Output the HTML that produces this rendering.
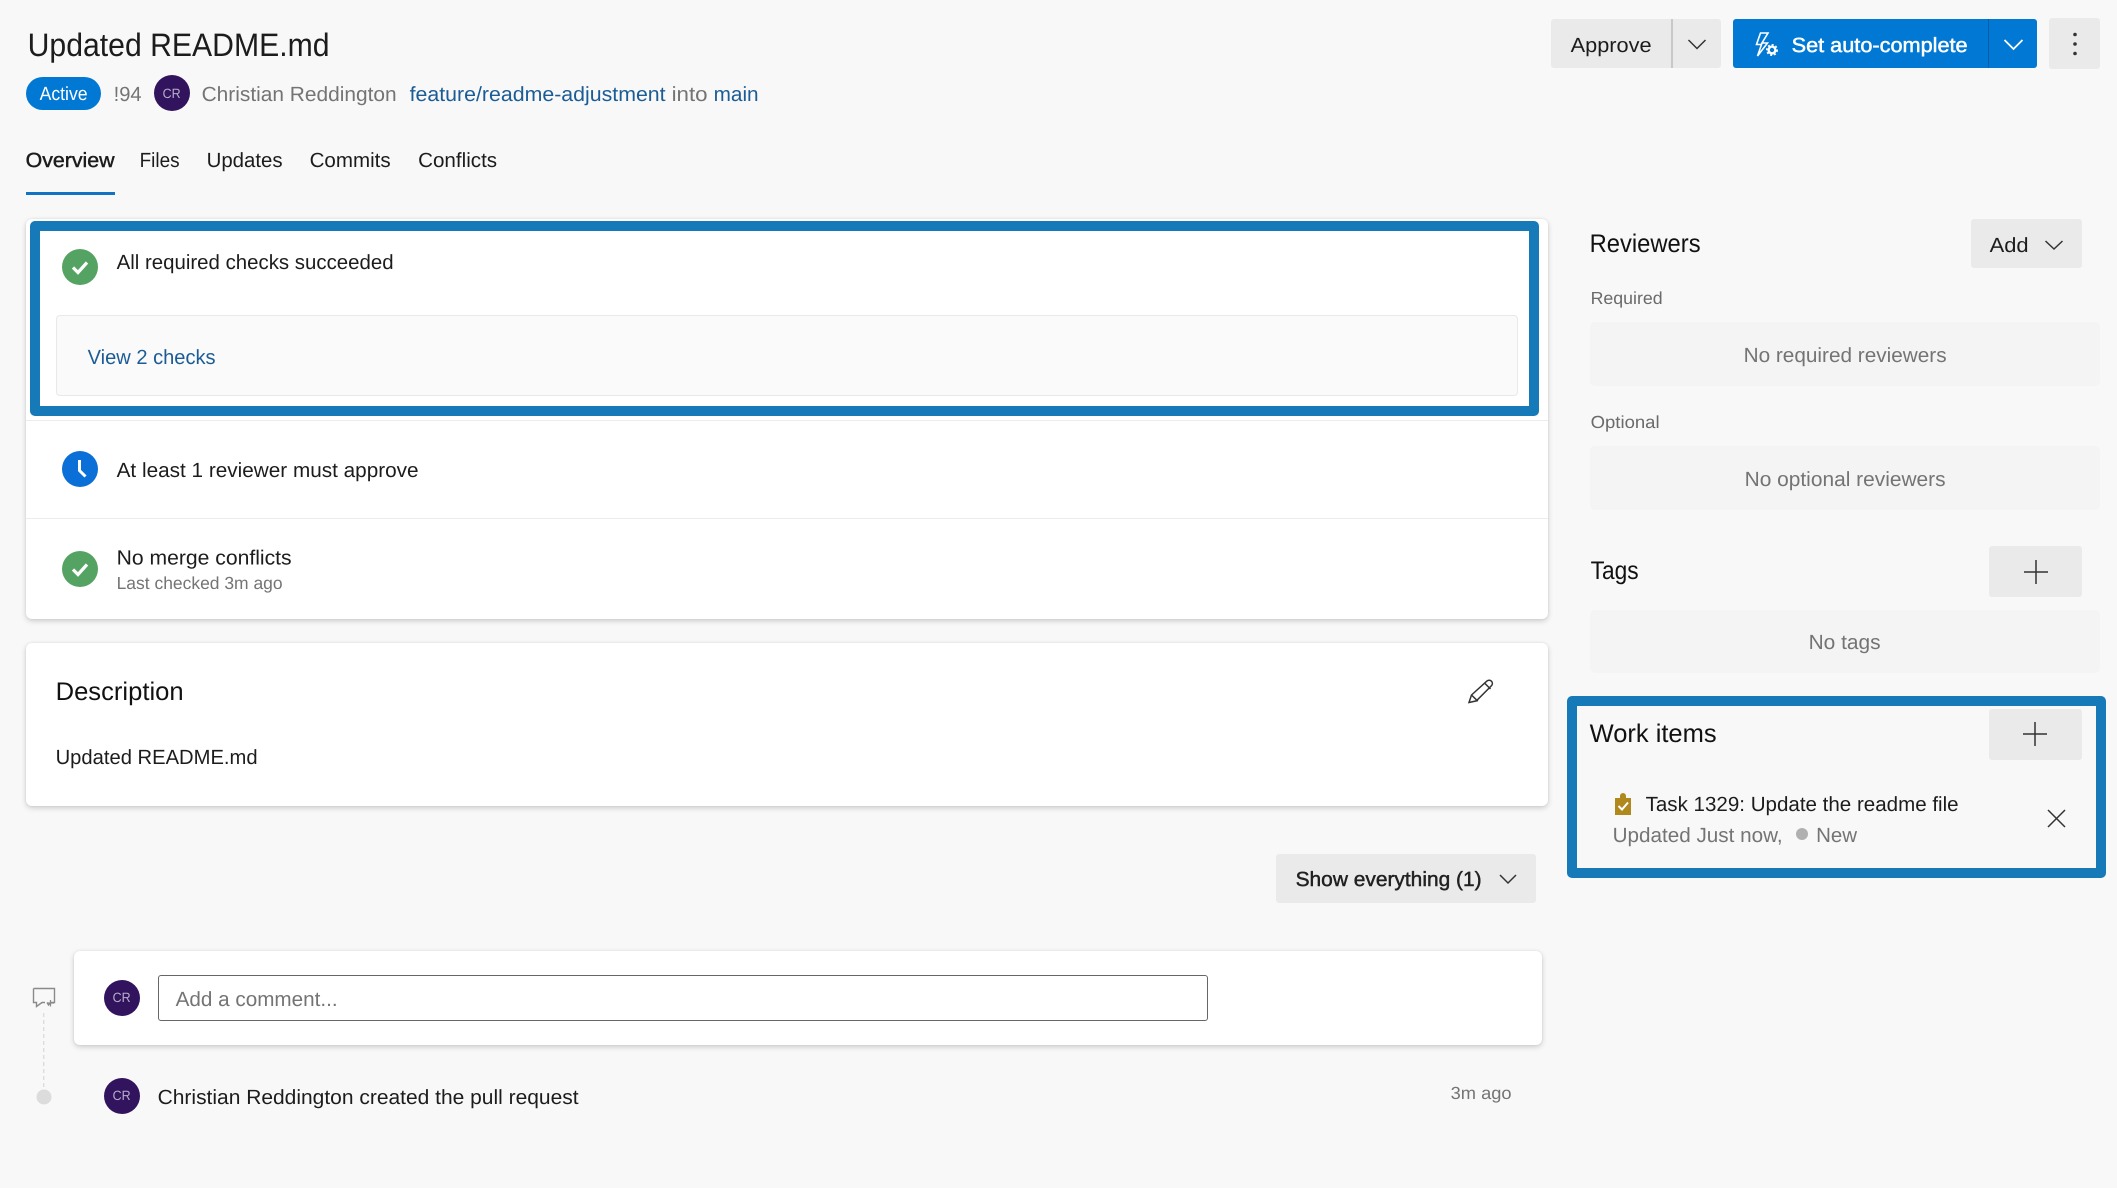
<!DOCTYPE html>
<html lang="en"><head><meta charset="utf-8"><title>Updated README.md</title>
<style>
html,body{margin:0;padding:0;width:2117px;height:1188px;overflow:hidden;background:#f8f8f8}
div{position:absolute;box-sizing:border-box}
.card{background:#fff;border-radius:6px;box-shadow:0 2px 6px rgba(0,0,0,.18),0 0 2px rgba(0,0,0,.07)}
.btn{background:#eaeaea;border-radius:3px}
.box{background:#f4f4f4;border-radius:5px;left:1590px;width:510px}
svg{position:absolute;left:0;top:0}
text{font-family:"Liberation Sans",sans-serif;font-size:20.5px;fill:#1c1c1c;text-rendering:geometricPrecision;transform:translate(-.4px,-.8px)}
.g{fill:#747474}.l{fill:#1c5c96}.s{font-size:17.5px}.h{font-size:25.5px;fill:#111}
.m{stroke:#1c1c1c;stroke-width:.45px}
.ic{fill:none;stroke:#333;stroke-width:1.5}
</style></head><body>
<div class="btn" style="left:1551px;top:19px;width:170px;height:49px"></div>
<div style="left:1671px;top:19px;width:2px;height:49px;background:#c8c8c8"></div>
<div style="left:1733px;top:19px;width:304px;height:49px;background:#0078d4;border-radius:3px"></div>
<div style="left:1988px;top:19px;width:1px;height:49px;background:#0a5ea6"></div>
<div class="btn" style="left:2049px;top:18px;width:51px;height:51px"></div>
<div style="left:26px;top:77px;width:75px;height:33px;background:#0078d4;border-radius:17px"></div>
<div style="left:26px;top:192px;width:89px;height:3px;background:#1272c4"></div>

<div class="card" style="left:26px;top:219px;width:1522px;height:400px"></div>
<div style="left:26px;top:420px;width:1522px;height:1px;background:#ececec"></div>
<div style="left:26px;top:518px;width:1522px;height:1px;background:#ececec"></div>
<div style="left:30px;top:221px;width:1509px;height:195px;border:10px solid #167ab8;border-radius:5px"></div>
<div style="left:56px;top:315px;width:1462px;height:81px;background:#fafafa;border:1px solid #e9e9e9;border-radius:4px"></div>

<div class="card" style="left:26px;top:643px;width:1522px;height:163px"></div>
<div class="btn" style="left:1276px;top:854px;width:260px;height:49px"></div>
<div class="card" style="left:74px;top:951px;width:1468px;height:94px"></div>
<div style="left:158px;top:975px;width:1050px;height:46px;background:#fff;border:1px solid #666;border-radius:3px"></div>

<div class="btn" style="left:1971px;top:219px;width:111px;height:49px"></div>
<div class="box" style="top:322px;height:64px"></div>
<div class="box" style="top:446px;height:64px"></div>
<div class="btn" style="left:1989px;top:546px;width:93px;height:51px"></div>
<div class="box" style="top:610px;height:63px"></div>
<div style="left:1567px;top:696px;width:539px;height:182px;border:10px solid #167ab8;border-radius:5px"></div>
<div class="btn" style="left:1989px;top:709px;width:93px;height:51px"></div>

<svg width="2117" height="1188" viewBox="0 0 2117 1188">
<!-- header -->
<text x="28" y="57" style="font-size:32.5px" textLength="302" lengthAdjust="spacingAndGlyphs">Updated README.md</text>
<text x="40" y="100.8" style="font-size:19px;fill:#fff" textLength="48" lengthAdjust="spacingAndGlyphs">Active</text>
<text x="114" y="101.8" class="g" textLength="28" lengthAdjust="spacingAndGlyphs">!94</text>
<circle cx="172" cy="93" r="18" fill="#32145e"/>
<text x="163" y="98.8" style="font-size:13.5px;fill:#b9aecb" textLength="18" lengthAdjust="spacingAndGlyphs">CR</text>
<text x="202" y="101.8" class="g" textLength="195" lengthAdjust="spacingAndGlyphs">Christian Reddington</text>
<text x="410" y="101.8" class="l" textLength="256" lengthAdjust="spacingAndGlyphs">feature/readme-adjustment</text>
<text x="672" y="101.8" class="g" textLength="36" lengthAdjust="spacingAndGlyphs">into</text>
<text x="714" y="101.8" class="l" textLength="45" lengthAdjust="spacingAndGlyphs">main</text>
<text x="26" y="167.8" class="m" textLength="89" lengthAdjust="spacingAndGlyphs">Overview</text>
<text x="140" y="167.8" textLength="40" lengthAdjust="spacingAndGlyphs">Files</text>
<text x="207" y="167.8" textLength="76" lengthAdjust="spacingAndGlyphs">Updates</text>
<text x="310" y="167.8" textLength="81" lengthAdjust="spacingAndGlyphs">Commits</text>
<text x="418.5" y="167.8" textLength="79" lengthAdjust="spacingAndGlyphs">Conflicts</text>

<!-- header actions -->
<text x="1571" y="53" textLength="81" lengthAdjust="spacingAndGlyphs">Approve</text>
<path d="M1688.5 40l8.5 8.5 8.5-8.5" class="ic"/>
<path d="M1768 33h-7.5l-4 11.5h5l-4 11.5 10-13h-5.5l6-10z" fill="none" stroke="#fff" stroke-width="1.6"/>
<circle cx="1772" cy="50" r="3.4" fill="none" stroke="#fff" stroke-width="2.4"/>
<circle cx="1772" cy="50" r="5.2" fill="none" stroke="#fff" stroke-width="1.6" stroke-dasharray="2 2"/>
<text x="1792" y="53" style="fill:#fff;stroke:#fff;stroke-width:.5px" textLength="176" lengthAdjust="spacingAndGlyphs">Set auto-complete</text>
<path d="M2004.5 40l9 9 9-9" fill="none" stroke="#fff" stroke-width="1.8"/>
<circle cx="2075" cy="34.5" r="1.8" fill="#333"/><circle cx="2075" cy="44" r="1.8" fill="#333"/><circle cx="2075" cy="53.5" r="1.8" fill="#333"/>

<!-- checks -->
<circle cx="80" cy="267" r="18" fill="#55a362"/>
<path d="M73 267.5l5 5 9-10" fill="none" stroke="#fff" stroke-width="3.2"/>
<text x="117" y="270" textLength="277" lengthAdjust="spacingAndGlyphs">All required checks succeeded</text>
<text x="88" y="365" class="l" textLength="128" lengthAdjust="spacingAndGlyphs">View 2 checks</text>
<circle cx="80" cy="469" r="18" fill="#0a6fd6"/>
<path d="M79.5 460v10.5l6 6" fill="none" stroke="#fff" stroke-width="3"/>
<text x="117" y="478" textLength="302" lengthAdjust="spacingAndGlyphs">At least 1 reviewer must approve</text>
<circle cx="80" cy="569" r="18" fill="#55a362"/>
<path d="M73 569.5l5 5 9-10" fill="none" stroke="#fff" stroke-width="3.2"/>
<text x="117" y="565.5" textLength="175" lengthAdjust="spacingAndGlyphs">No merge conflicts</text>
<text x="117" y="590" class="g s" textLength="166" lengthAdjust="spacingAndGlyphs">Last checked 3m ago</text>

<!-- description -->
<text x="56" y="701" class="h" textLength="128" lengthAdjust="spacingAndGlyphs">Description</text>
<text x="56" y="765" textLength="202" lengthAdjust="spacingAndGlyphs">Updated README.md</text>
<path d="M1469 702.5l2.5-7.5 15.5-14c1.5-1.2 3.5-.8 4.5.3 1.2 1.3 1.2 3.2-.2 4.6l-15 15zM1471.5 695l6.3 6.2M1484.5 683l6 6" class="ic"/>
<text x="1296" y="887" class="m" style="fill:#222" textLength="186" lengthAdjust="spacingAndGlyphs">Show everything (1)</text>
<path d="M1500 875l8 8 8-8" class="ic"/>

<!-- timeline -->
<path d="M33.5 988.5h21v14h-3.5l-2.5 2.5-1.5-2.5M33.5 988.5v14h3v4l5.5-4h3" fill="none" stroke="#8a8a8a" stroke-width="1.4"/>
<path d="M47 1003h7M50.5 1000v6.5" fill="none" stroke="#8a8a8a" stroke-width="1.2"/>
<path d="M43.7 1013V1087" fill="none" stroke="#ddd" stroke-width="1.4" stroke-dasharray="4 3"/>
<circle cx="44" cy="1097" r="7.5" fill="#dcdcdc"/>
<circle cx="122" cy="998" r="18" fill="#32145e"/>
<text x="113" y="1003" style="font-size:13.5px;fill:#b9aecb" textLength="18" lengthAdjust="spacingAndGlyphs">CR</text>
<text x="176" y="1007" class="g" textLength="162" lengthAdjust="spacingAndGlyphs">Add a comment...</text>
<circle cx="122" cy="1096" r="18" fill="#32145e"/>
<text x="113" y="1101" style="font-size:13.5px;fill:#b9aecb" textLength="18" lengthAdjust="spacingAndGlyphs">CR</text>
<text x="158" y="1105" textLength="421" lengthAdjust="spacingAndGlyphs">Christian Reddington created the pull request</text>
<text x="1451" y="1100" class="g s" textLength="61" lengthAdjust="spacingAndGlyphs">3m ago</text>

<!-- right panel -->
<text x="1590" y="253" class="h" textLength="111" lengthAdjust="spacingAndGlyphs">Reviewers</text>
<text x="1990" y="253" textLength="39" lengthAdjust="spacingAndGlyphs">Add</text>
<path d="M2045.5 241l8.5 8 8.5-8" class="ic"/>
<text x="1591" y="305" class="s" style="fill:#6a6a6a" textLength="72" lengthAdjust="spacingAndGlyphs">Required</text>
<text x="1744" y="363" class="g" textLength="203" lengthAdjust="spacingAndGlyphs">No required reviewers</text>
<text x="1591" y="429" class="s" style="fill:#6a6a6a" textLength="69" lengthAdjust="spacingAndGlyphs">Optional</text>
<text x="1745" y="487" class="g" textLength="201" lengthAdjust="spacingAndGlyphs">No optional reviewers</text>
<text x="1591" y="580" class="h" textLength="48" lengthAdjust="spacingAndGlyphs">Tags</text>
<path d="M2024 572h24M2036 560v24" class="ic"/>
<text x="1809" y="650" class="g" textLength="72" lengthAdjust="spacingAndGlyphs">No tags</text>
<text x="1590" y="743" class="h" textLength="127" lengthAdjust="spacingAndGlyphs">Work items</text>
<path d="M2023 734h24M2035 722v24" class="ic"/>
<path d="M1615 798h5v-2a3 3 0 0 1 6 0v2h5v17h-16z" fill="#b0891c"/>
<path d="M1618.5 806l3.5 3.5 6-7" fill="none" stroke="#fff" stroke-width="2"/>
<text x="1646" y="812" textLength="313" lengthAdjust="spacingAndGlyphs">Task 1329: Update the readme file</text>
<path d="M2048 810l17 17M2065 810l-17 17" class="ic"/>
<text x="1613" y="843" class="g" textLength="170" lengthAdjust="spacingAndGlyphs">Updated Just now,</text>
<circle cx="1802" cy="834" r="6" fill="#b0b0b0"/>
<text x="1816.5" y="843" class="g" textLength="41" lengthAdjust="spacingAndGlyphs">New</text>
</svg>
</body></html>
